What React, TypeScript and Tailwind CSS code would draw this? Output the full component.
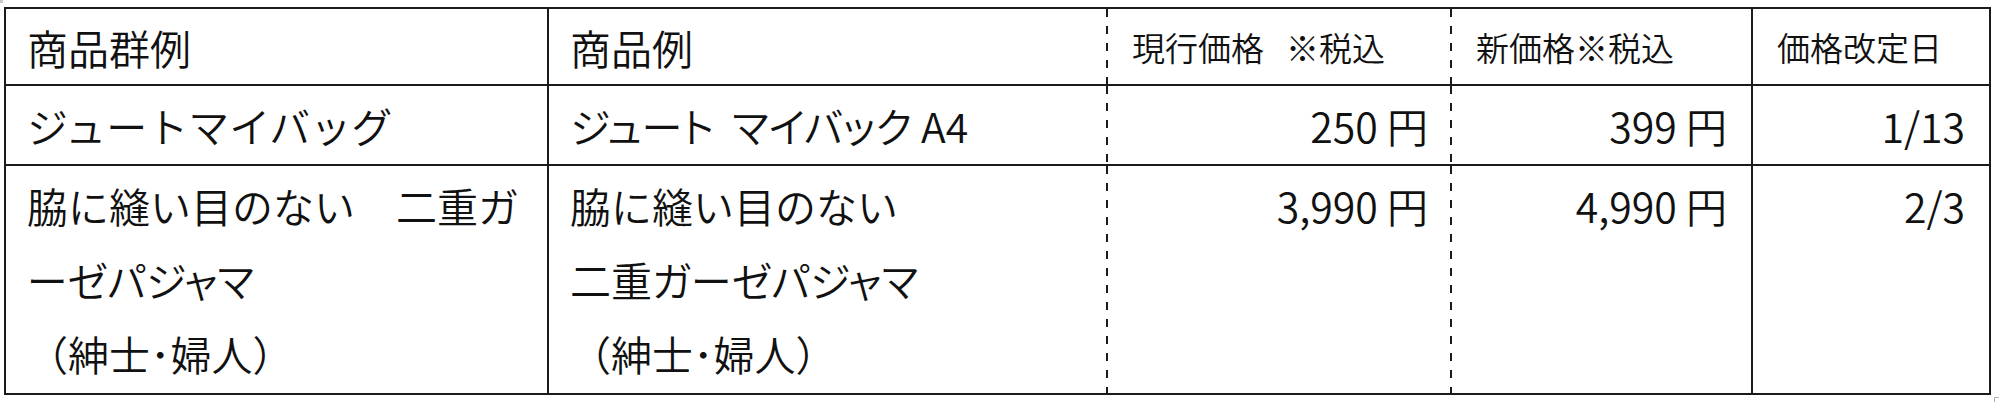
const font = {
  fontFamily: '"Noto Sans CJK JP", "Noto Sans", sans-serif',
};

type Line = string | { text: string; tight: boolean };

type Cell = {
  lines: Line[];
  align?: 'left' | 'right';
  small?: boolean;
};

const widths = ['w-[543px]', 'w-[559px]', 'w-[344px]', 'w-[301px]', 'w-[238px]'];

// dashed columns get a drawn dash pattern (8px dash / 9px gap) instead of the browser's short dashes
const dashed =
  '[background-image:repeating-linear-gradient(to_bottom,#1b1b1b_0px,#1b1b1b_8px,transparent_8px,transparent_17px)] bg-[length:2px_100%] bg-no-repeat bg-right';

const rightBorders = [
  'border-r-2 border-r-[#1b1b1b]',
  `pr-[2px] ${dashed}`,
  `pr-[2px] ${dashed}`,
  'border-r-2 border-r-[#1b1b1b]',
  'border-r-2 border-r-[#1b1b1b]',
];

// proportional kana ("palt") where the original used the narrower kana spacing
const tight = (text: string): Line => ({ text, tight: true });

const rows: { height: string; top: boolean; cells: Cell[] }[] = [
  {
    height: 'h-[77px]',
    top: false,
    cells: [
      { lines: ['商品群例'] },
      { lines: ['商品例'] },
      { lines: ['現行価格   ※税込'], small: true },
      { lines: ['新価格※税込'], small: true },
      { lines: ['価格改定日'], small: true },
    ],
  },
  {
    height: 'h-[80px]',
    top: false,
    cells: [
      { lines: ['ジュートマイバッグ'] },
      { lines: [tight('ジュート  マイバック A4')] },
      { lines: ['250 円'], align: 'right' },
      { lines: ['399 円'], align: 'right' },
      { lines: ['1/13'], align: 'right' },
    ],
  },
  {
    height: 'h-[229px]',
    top: true,
    cells: [
      { lines: ['脇に縫い目のない\u3000二重ガ', tight('ーゼパジャマ'), '（紳士･婦人）'] },
      { lines: ['脇に縫い目のない', tight('二重ガーゼパジャマ'), '（紳士･婦人）'] },
      { lines: ['3,990 円'], align: 'right' },
      { lines: ['4,990 円'], align: 'right' },
      { lines: ['2/3'], align: 'right' },
    ],
  },
];

export default function App() {
  return (
    <div className="w-[2000px] h-[403px] bg-white relative overflow-hidden" style={font}>
      {/* resize handles from the document editor */}
      <div className="absolute left-0 top-0 w-[3px] h-[3px] bg-[#c8c8c8]" />
      <div className="absolute left-[1994px] top-[397px] w-[5px] h-[5px] border-l border-t border-[#b0b0b0]" />

      <div className="ml-[4px] mt-[7px] inline-flex flex-col border-l-2 border-t-2 border-[#1b1b1b] text-[#111] font-[350]">
        {rows.map((row, r) => (
          <div key={r} className={`flex ${row.height}`}>
            {row.cells.map((cell, c) => (
              <div
                key={c}
                className={`${widths[c]} ${rightBorders[c]} border-b-2 border-b-[#1b1b1b] flex flex-col ${
                  row.top ? 'justify-start pt-[2px]' : 'justify-center'
                } ${cell.align === 'right' ? 'items-end pr-[24px]' : 'items-start pl-[21px]'} ${
                  cell.small ? 'text-[33px] pl-[24px]' : 'text-[41px]'
                } leading-[74px] whitespace-pre`}
              >
                {cell.lines.map((line, i) =>
                  typeof line === 'string' ? (
                    <span key={i}>{line}</span>
                  ) : (
                    <span key={i} className="[font-feature-settings:'palt']">
                      {line.text}
                    </span>
                  )
                )}
              </div>
            ))}
          </div>
        ))}
      </div>
    </div>
  );
}
